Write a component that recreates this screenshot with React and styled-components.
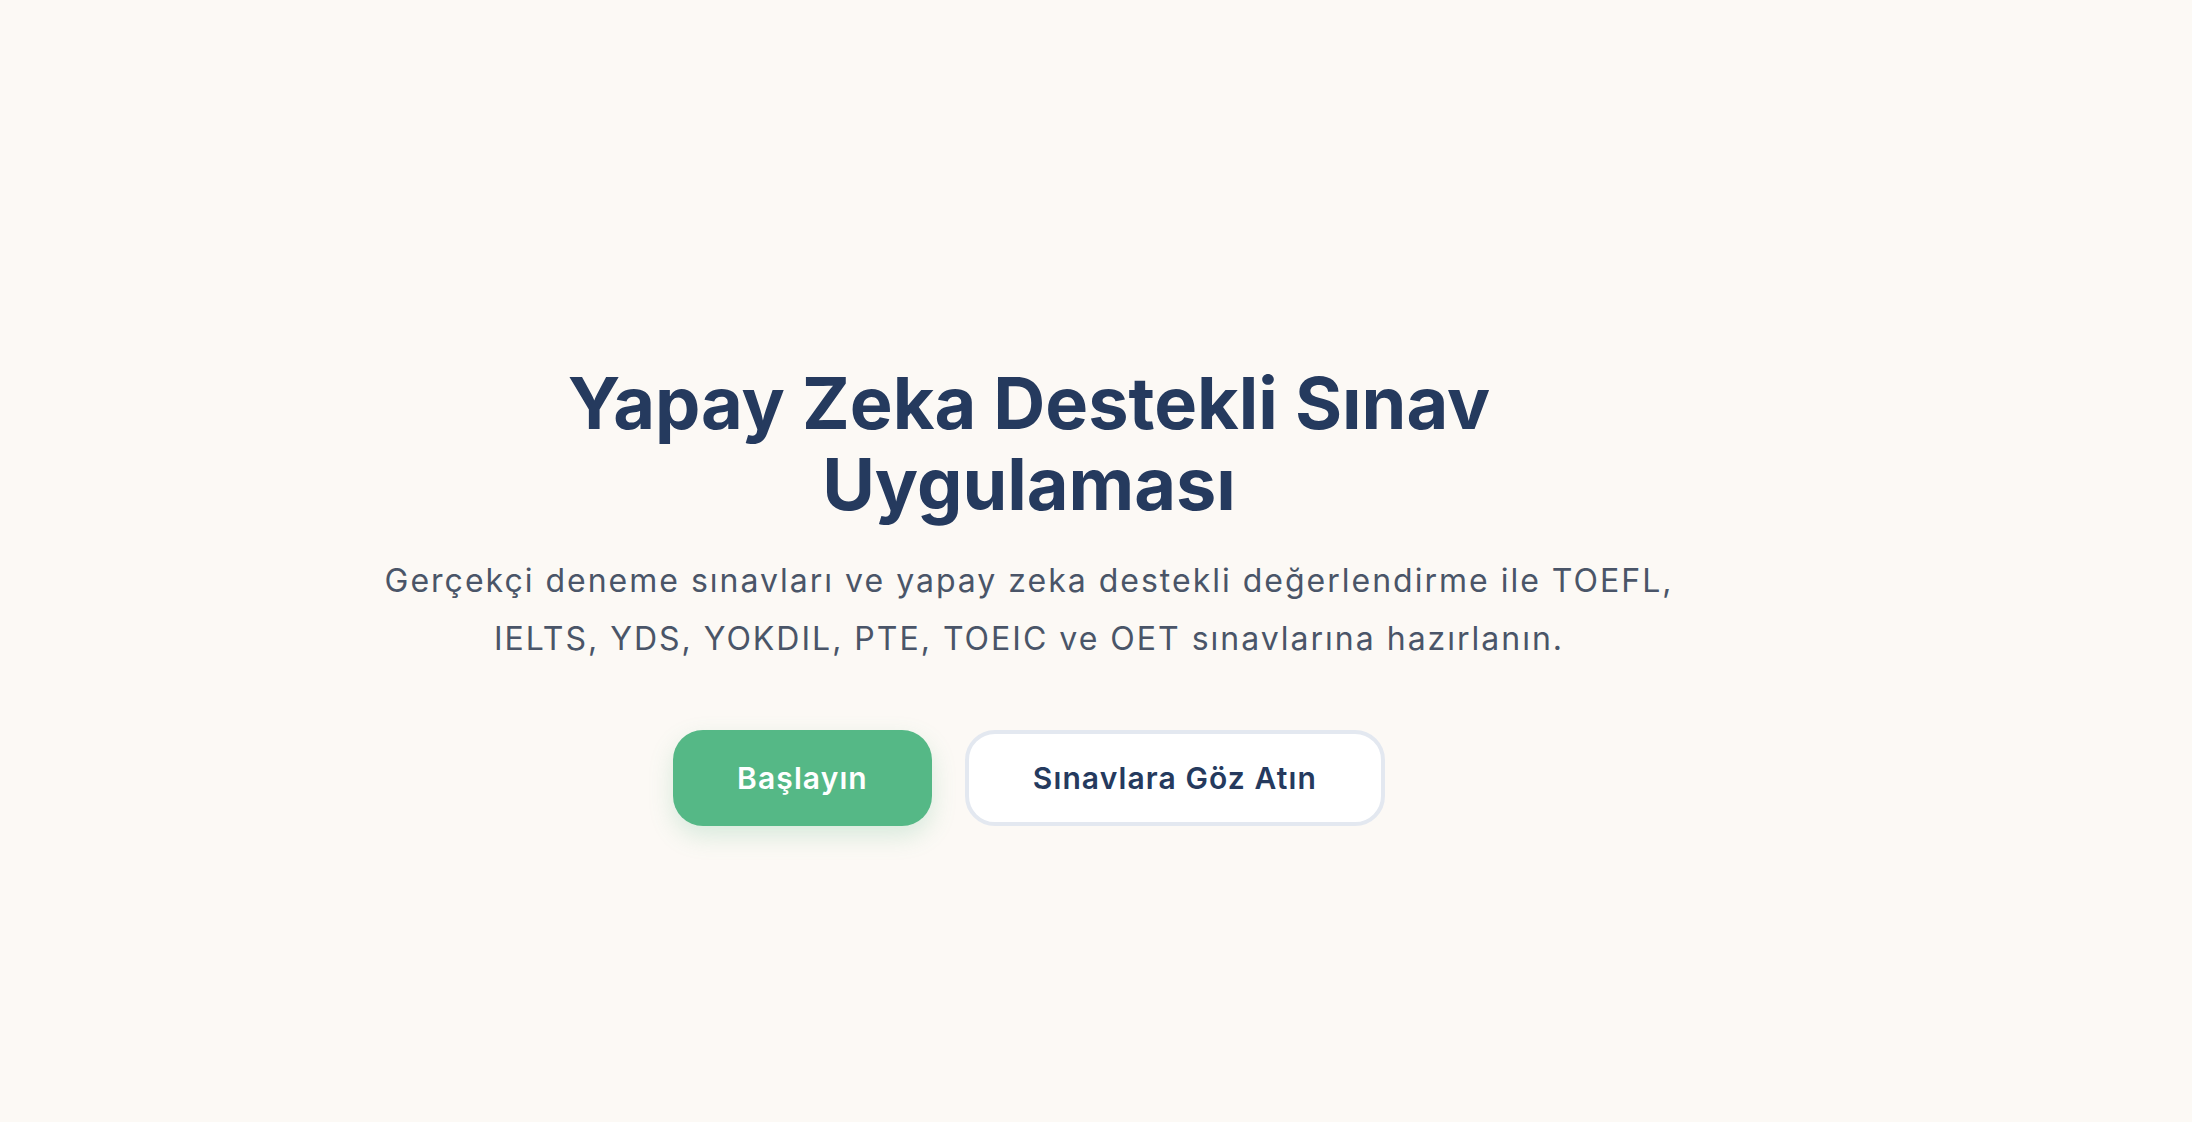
import React from "react";
import styled, { createGlobalStyle } from "styled-components";

const Global = createGlobalStyle`
  html, body { margin: 0; padding: 0; background: #fcf9f5; }
  body { font-family: Inter, "Noto Sans", sans-serif; }
`;

const Page = styled.main`
  min-height: 100vh;
  box-sizing: border-box;
  display: flex;
  justify-content: center;
  padding: 362px 134px 0 0;
`;

const Hero = styled.section`
  display: flex;
  flex-direction: column;
  align-items: center;
  text-align: center;
  max-width: 1400px;
`;

const Title = styled.h1`
  margin: 0;
  max-width: 1000px;
  font-size: 72px;
  line-height: 81px;
  font-weight: 700;
  color: #253a5e;
  letter-spacing: 0;
`;

const Lead = styled.p`
  margin: 28px 0 0;
  font-size: 32px;
  line-height: 58px;
  font-weight: 400;
  letter-spacing: 2px;
  color: #4a5568;
`;

const Actions = styled.div`
  display: flex;
  gap: 33px;
  margin-top: 62px;
`;

const Button = styled.button`
  height: 96px;
  box-sizing: border-box;
  padding: 0 64px;
  border-radius: 30px;
  font-family: Inter, "Noto Sans", sans-serif;
  font-size: 30px;
  font-weight: 600;
  letter-spacing: 1.1px;
  cursor: pointer;
  border: ${(p) => (p.$primary ? "none" : "4px solid #e3e8f0")};
  background: ${(p) => (p.$primary ? "#55b886" : "#ffffff")};
  color: ${(p) => (p.$primary ? "#ffffff" : "#253a5e")};
  box-shadow: ${(p) =>
    p.$primary ? "0 10px 24px rgba(85, 184, 134, 0.22)" : "none"};
`;

export default function App() {
  return (
    <>
      <Global />
      <Page>
        <Hero>
          <Title>Yapay Zeka Destekli Sınav Uygulaması</Title>
          <Lead>
            Gerçekçi deneme sınavları ve yapay zeka destekli değerlendirme ile TOEFL,
            <br />
            IELTS, YDS, YOKDIL, PTE, TOEIC ve OET sınavlarına hazırlanın.
          </Lead>
          <Actions>
            <Button $primary>Başlayın</Button>
            <Button>Sınavlara Göz Atın</Button>
          </Actions>
        </Hero>
      </Page>
    </>
  );
}
